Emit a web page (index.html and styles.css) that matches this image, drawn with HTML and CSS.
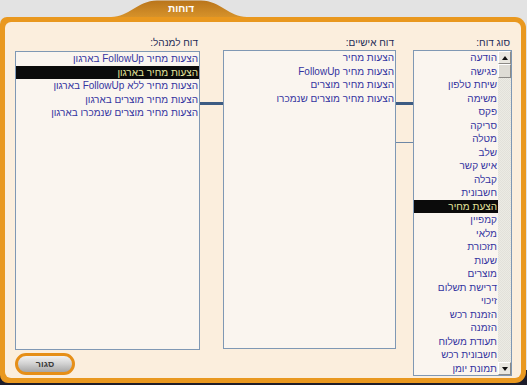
FILE: index.html
```html
<!DOCTYPE html>
<html lang="he">
<head>
<meta charset="utf-8">
<title>דוחות</title>
<link rel="stylesheet" href="styles.css">
</head>
<body>
<div class="page">
  <div class="tabbar">
    <div class="tab">
      <svg class="tab-shape" width="136" height="17" viewBox="0 0 136 17" aria-hidden="true">
        <defs>
          <linearGradient id="tg" x1="0" y1="0" x2="0" y2="1">
            <stop offset="0" stop-color="#b9751b"/>
            <stop offset="1" stop-color="#d6922a"/>
          </linearGradient>
        </defs>
        <path d="M0,17 C18,17 26,1 46,0.5 L90,0.5 C110,1 118,17 136,17 Z" fill="url(#tg)"/>
      </svg>
      <span class="tab-title">דוחות</span>
    </div>
  </div>
  <div class="panel">
    <div class="inner" dir="rtl">
      <div class="col col-type">
        <div class="label">סוג דוח:</div>
        <div class="list list-type">
          <div class="scrollbar">
            <div class="sb-btn"><span class="tri-up"></span></div>
            <div class="sb-thumb"></div>
            <div class="sb-track"></div>
            <div class="sb-btn"><span class="tri-down"></span></div>
          </div>
          <div class="items">
            <div class="item">הודעה</div>
            <div class="item">פגישה</div>
            <div class="item">שיחת טלפון</div>
            <div class="item">משימה</div>
            <div class="item">פקס</div>
            <div class="item">סריקה</div>
            <div class="item">מטלה</div>
            <div class="item">שלב</div>
            <div class="item">איש קשר</div>
            <div class="item">קבלה</div>
            <div class="item">חשבונית</div>
            <div class="item selected">הצעת מחיר</div>
            <div class="item">קמפיין</div>
            <div class="item">מלאי</div>
            <div class="item">תזכורת</div>
            <div class="item">שעות</div>
            <div class="item">מוצרים</div>
            <div class="item">דרישת תשלום</div>
            <div class="item">זיכוי</div>
            <div class="item">הזמנת רכש</div>
            <div class="item">הזמנה</div>
            <div class="item">תעודת משלוח</div>
            <div class="item">חשבונית רכש</div>
            <div class="item">תמונת יומן</div>
          </div>
        </div>
      </div>
      <div class="link link-right">
        <div class="line thick"></div>
        <div class="line thin"></div>
      </div>
      <div class="col col-personal">
        <div class="label">דוח אישיים:</div>
        <div class="list list-personal">
          <div class="items">
            <div class="item">הצעות מחיר</div>
            <div class="item">הצעות מחיר FollowUp</div>
            <div class="item">הצעות מחיר מוצרים</div>
            <div class="item">הצעות מחיר מוצרים שנמכרו</div>
          </div>
        </div>
      </div>
      <div class="link link-left">
        <div class="line thick"></div>
      </div>
      <div class="col col-manager">
        <div class="label">דוח למנהל:</div>
        <div class="list list-manager">
          <div class="items">
            <div class="item">הצעות מחיר FollowUp בארגון</div>
            <div class="item selected">הצעות מחיר בארגון</div>
            <div class="item">הצעות מחיר ללא FollowUp בארגון</div>
            <div class="item">הצעות מחיר מוצרים בארגון</div>
            <div class="item">הצעות מחיר מוצרים שנמכרו בארגון</div>
          </div>
        </div>
        <button class="close-btn" type="button">סגור</button>
      </div>
    </div>
  </div>
</div>
</body>
</html>
```
FILE: styles.css
```css
html, body {
  margin: 0;
  padding: 0;
}
body {
  width: 527px;
  height: 385px;
  overflow: hidden;
  background: linear-gradient(#e3e3e3 0, #e3e3e3 370px, #1d1d2b 370px);
  font-family: "Liberation Sans", Arial, sans-serif;
  font-size: 10px;
}
.page {
  display: flex;
  flex-direction: column;
}
.tabbar {
  height: 17px;
  display: flex;
}
.tab {
  position: relative;
  margin-left: 111px;
  width: 136px;
  height: 17px;
  display: flex;
  justify-content: center;
  align-items: center;
}
.tab-shape {
  position: absolute;
  left: 0;
  top: 0;
  display: block;
}
.tab-title {
  position: relative;
  color: #ffffff;
  font-weight: bold;
  font-size: 10px;
  line-height: 12px;
  padding-top: 1px;
  margin-left: 4px;
}
.panel {
  width: 526px;
  height: 366px;
  box-sizing: border-box;
  padding: 5px;
  background: #e9981f;
  border-radius: 7px 11px 11px 8px;
}
.inner {
  height: 356px;
  box-sizing: border-box;
  background: #fbeedd;
  border-radius: 6px;
  padding: 14px 9px 0 10px;
  display: flex;
  flex-direction: row;
  align-items: flex-start;
}
.col {
  display: flex;
  flex-direction: column;
}
.col-type { width: 99px; }
.col-personal { width: 173px; }
.col-manager { width: 185px; }
.link-right { width: 17px; }
.link-left { width: 23px; }
.label {
  height: 14px;
  line-height: 14px;
  color: #1e2b57;
  font-size: 10px;
  padding-right: 2px;
}
.list {
  box-sizing: border-box;
  border: 1px solid #7f98b4;
  background: #faf5ef;
  overflow: hidden;
}
.list-type {
  height: 326px;
  display: flex;
  flex-direction: row;
}
.list-personal {
  height: 299px;
}
.list-manager {
  height: 299px;
  margin-top: 1px;
}
.items {
  flex: 1;
  display: flex;
  flex-direction: column;
}
.item {
  height: 13.5px;
  line-height: 13.5px;
  padding-right: 1px;
  color: #3434a0;
  white-space: nowrap;
}
.item.selected {
  background: #0b0b0b;
  color: #e4e49c;
}
.scrollbar {
  width: 13px;
  display: flex;
  flex-direction: column;
  background-color: #ecebe4;
  background-image: linear-gradient(45deg, #e2e1da 25%, transparent 25%, transparent 75%, #e2e1da 75%), linear-gradient(45deg, #e2e1da 25%, transparent 25%, transparent 75%, #e2e1da 75%);
  background-size: 2px 2px;
  background-position: 0 0, 1px 1px;
}
.sb-btn, .sb-thumb {
  box-sizing: border-box;
  width: 13px;
  height: 13px;
  background: #e9e7e0;
  border-top: 1px solid #ffffff;
  border-left: 1px solid #ffffff;
  border-right: 1px solid #8c8a86;
  border-bottom: 1px solid #8c8a86;
  display: flex;
  align-items: center;
  justify-content: center;
}
.sb-thumb {
  height: 14px;
  background: #dedcd5;
}
.sb-track {
  flex: 1;
}
.tri-up {
  width: 0;
  height: 0;
  border-left: 3px solid transparent;
  border-right: 3px solid transparent;
  border-bottom: 4px solid #111111;
}
.tri-down {
  width: 0;
  height: 0;
  border-left: 3px solid transparent;
  border-right: 3px solid transparent;
  border-top: 4px solid #111111;
}
.link {
  display: flex;
  flex-direction: column;
  padding-top: 66px;
}
.line {
  background: #3d5b82;
}
.line.thick {
  height: 3px;
}
.line.thin {
  height: 1px;
  margin-top: 37px;
  background: #6d87a6;
}
.close-btn {
  align-self: flex-end;
  margin: 3px 8px 0 0;
  width: 60px;
  height: 22px;
  box-sizing: border-box;
  border: 3px solid #e68f18;
  border-radius: 11px;
  background: linear-gradient(#f2f2f2 0%, #d4d4d4 45%, #a6a6a6 100%);
  color: #3a3a3a;
  font-family: "Liberation Sans", Arial, sans-serif;
  font-size: 9px;
  font-weight: bold;
  padding: 0;
  line-height: 14px;
}
```
